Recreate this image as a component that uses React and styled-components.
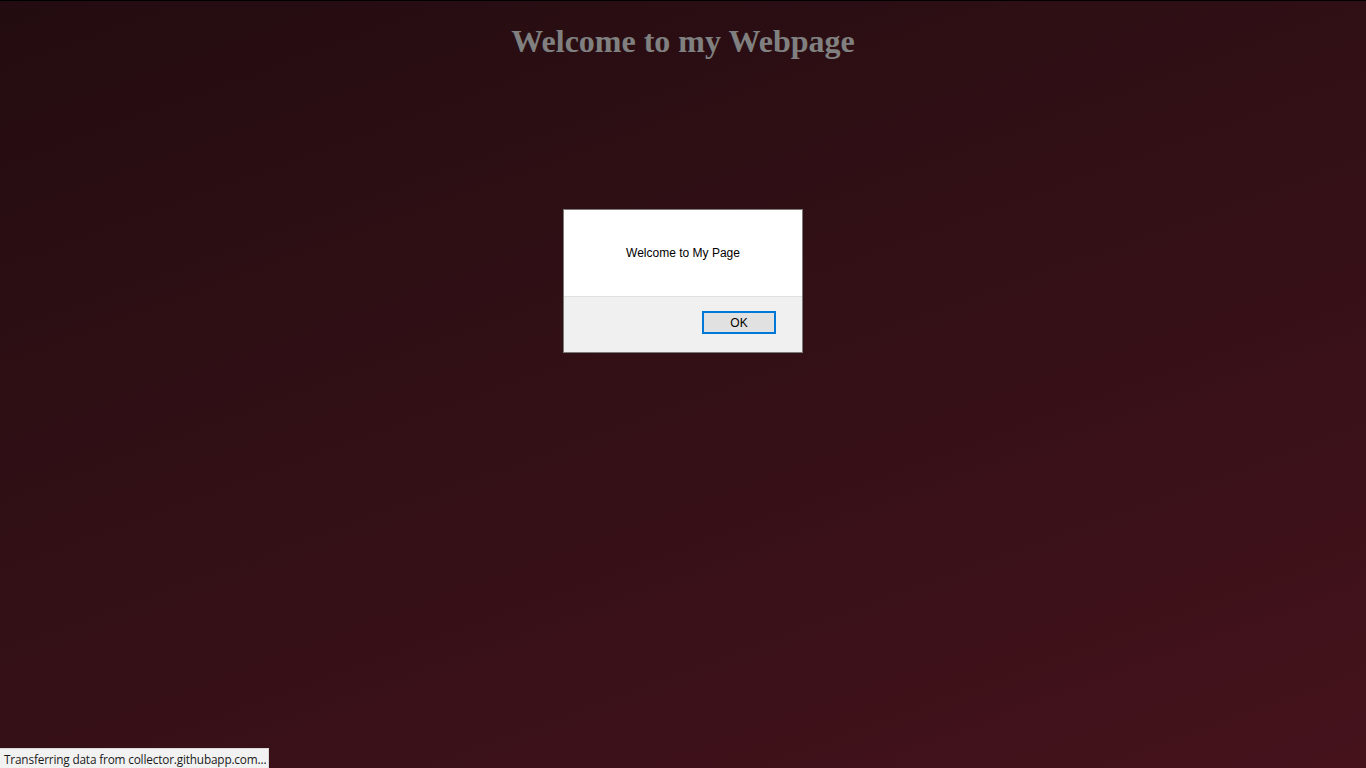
import React from "react";
import styled, { createGlobalStyle } from "styled-components";

const GlobalStyle = createGlobalStyle`
  html, body {
    margin: 0;
    padding: 0;
    height: 100%;
  }
  body {
    font-family: "Liberation Serif", "Times New Roman", serif;
  }
  #root {
    min-height: 100%;
  }
`;

const Page = styled.div`
  box-sizing: border-box;
  width: 100%;
  height: 768px;
  border-top: 1px solid #000;
  background: linear-gradient(160deg, #230c10 0%, #331016 50%, #45121c 100%);
  display: flex;
  flex-direction: column;
  align-items: center;
  position: relative;
  overflow: hidden;
`;

const Heading = styled.h1`
  margin: 22px 0 0;
  font-family: "Liberation Serif", "Times New Roman", serif;
  font-size: 32px;
  font-weight: bold;
  color: #808080;
  line-height: normal;
`;

const Dialog = styled.div`
  position: absolute;
  left: 563px;
  top: 208px;
  width: 238px;
  border: 1px solid #7a7a7a;
  background: #f0f0f0;
  display: flex;
  flex-direction: column;
  font-family: "Liberation Sans", Arial, sans-serif;
`;

const DialogBody = styled.div`
  height: 86px;
  background: #fff;
  border-bottom: 1px solid #dfdfdf;
  display: flex;
  align-items: center;
  justify-content: center;
  font-size: 12px;
  color: #000;
`;

const DialogFooter = styled.div`
  height: 55px;
  display: flex;
  align-items: center;
  justify-content: flex-end;
  padding-right: 26px;
`;

const OkButton = styled.button`
  box-sizing: border-box;
  width: 74px;
  height: 23px;
  margin-top: -4px;
  border: 2px solid #0078d7;
  background: #e1e1e1;
  font-family: "Liberation Sans", Arial, sans-serif;
  font-size: 12px;
  color: #000;
  padding: 0;
  display: flex;
  align-items: center;
  justify-content: center;
`;

const StatusBar = styled.div`
  position: absolute;
  left: 0;
  bottom: 0;
  height: 20px;
  width: 269px;
  box-sizing: border-box;
  background: #f2f2f2;
  border-top: 1px solid #d9d9d9;
  border-right: 1px solid #d9d9d9;
  padding-left: 4px;
  display: flex;
  align-items: center;
  font-family: "Open Sans", "Noto Sans", sans-serif;
  font-size: 11.8px;
  letter-spacing: -0.17px;
  color: #1a1a1a;
  white-space: nowrap;
`;

export default function App() {
  return (
    <>
      <GlobalStyle />
      <Page>
        <Heading>Welcome to my Webpage</Heading>
        <Dialog>
          <DialogBody>Welcome to My Page</DialogBody>
          <DialogFooter>
            <OkButton>OK</OkButton>
          </DialogFooter>
        </Dialog>
        <StatusBar>Transferring data from collector.githubapp.com...</StatusBar>
      </Page>
    </>
  );
}
